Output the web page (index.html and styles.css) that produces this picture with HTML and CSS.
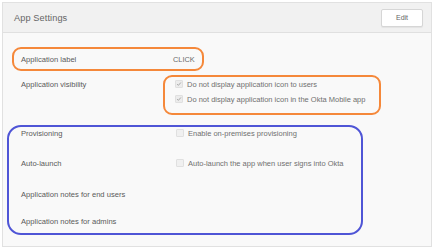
FILE: index.html
```html
<!DOCTYPE html>
<html>
<head>
<meta charset="utf-8">
<link rel="stylesheet" href="styles.css">
</head>
<body>
<div class="card">
  <div class="card-header">
    <span class="title">App Settings</span>
    <button class="edit">Edit</button>
  </div>
  <div class="card-body">
    <div class="hl-orange row-label-box">
      <span class="label lbl1">Application label</span>
      <span class="value">CLICK</span>
    </div>
    <div class="vis-row">
      <span class="label lbl2">Application visibility</span>
      <div class="hl-orange vis-box">
        <div class="check-line"><span class="cb checked"><svg viewBox="0 0 8 8" width="6" height="6"><path d="M1.5 4.2 L3.2 5.8 L6.5 2" fill="none" stroke="#a0a0a0" stroke-width="1.2"/></svg></span><span class="ctext">Do not display application icon to users</span></div>
        <div class="check-line"><span class="cb checked"><svg viewBox="0 0 8 8" width="6" height="6"><path d="M1.5 4.2 L3.2 5.8 L6.5 2" fill="none" stroke="#a0a0a0" stroke-width="1.2"/></svg></span><span class="ctext">Do not display application icon in the Okta Mobile app</span></div>
      </div>
    </div>
    <div class="hl-blue">
      <div class="brow r1"><span class="label lbl3">Provisioning</span><span class="cb"></span><span class="ctext">Enable on-premises provisioning</span></div>
      <div class="brow r2"><span class="label lbl3">Auto-launch</span><span class="cb"></span><span class="ctext">Auto-launch the app when user signs into Okta</span></div>
      <div class="brow r3"><span class="label lbl3">Application notes for end users</span></div>
      <div class="brow r4"><span class="label lbl3">Application notes for admins</span></div>
    </div>
  </div>
</div>
</body>
</html>
```
FILE: styles.css
```css
html, body {
  margin: 0;
  padding: 0;
  background: #ffffff;
}
body {
  font-family: "Liberation Sans", Arial, sans-serif;
  width: 436px;
  height: 250px;
  overflow: hidden;
}
.card {
  margin: 2px 0 0 2px;
  width: 428px;
  height: 243px;
  border: 1px solid #e1e1e1;
  background: #f9f9f9;
  box-sizing: content-box;
}
.card-header {
  height: 29px;
  background: #f1f1f1;
  border-bottom: 1px solid #e0e0e0;
  display: flex;
  align-items: center;
  justify-content: space-between;
  padding: 0 8px 0 11px;
}
.title {
  font-size: 9.2px;
  color: #666666;
  letter-spacing: 0.1px;
}
.edit {
  width: 42px;
  height: 18px;
  background: #ffffff;
  border: 1px solid #d6d6d6;
  border-radius: 2px;
  font-family: "Liberation Sans", Arial, sans-serif;
  font-size: 7px;
  color: #666;
  padding: 0;
  margin-top: 0;
  box-shadow: 0 1px 1px rgba(0,0,0,0.06);
}
.card-body {
  padding-top: 14px;
}
.label {
  font-size: 7.6px;
  color: #595959;
  white-space: nowrap;
}
.hl-orange {
  border: 2px solid #f5883a;
  border-radius: 9px;
  box-sizing: border-box;
}
.row-label-box {
  margin-left: 9px;
  width: 192px;
  height: 24px;
  display: flex;
  align-items: center;
  padding-left: 7px;
}
.lbl1 {
  width: 152px;
}
.value {
  font-size: 7.4px;
  color: #6a6a6a;
}
.vis-row {
  display: flex;
  margin-top: 4px;
}
.lbl2 {
  width: 142px;
  padding-left: 18px;
  margin-top: 5px;
}
.vis-box {
  width: 218px;
  height: 40px;
  padding: 2px 0 0 10px;
  display: flex;
  flex-direction: column;
  gap: 5px;
}
.check-line {
  display: flex;
  align-items: center;
  height: 10px;
}
.cb {
  width: 6px;
  height: 6px;
  border: 1px solid #e0e0e0;
  border-radius: 1px;
  background: #f0f0f0;
  display: inline-flex;
  align-items: center;
  justify-content: center;
  flex: none;
}
.cb.checked {
  background: #ececec;
}
.ctext {
  font-size: 7.5px;
  color: #707070;
  margin-left: 4px;
  white-space: nowrap;
}
.hl-blue {
  margin: 10px 0 0 4px;
  width: 356px;
  height: 110px;
  border: 2.5px solid #4f55d6;
  border-radius: 14px;
  box-sizing: border-box;
  padding-left: 12px;
}
.brow {
  display: flex;
  align-items: center;
  height: 10px;
}
.lbl3 {
  width: 155px;
}
.r1 { margin-top: 1px; }
.r2 { margin-top: 20px; }
.r3 { margin-top: 21px; }
.r4 { margin-top: 17px; }
```
